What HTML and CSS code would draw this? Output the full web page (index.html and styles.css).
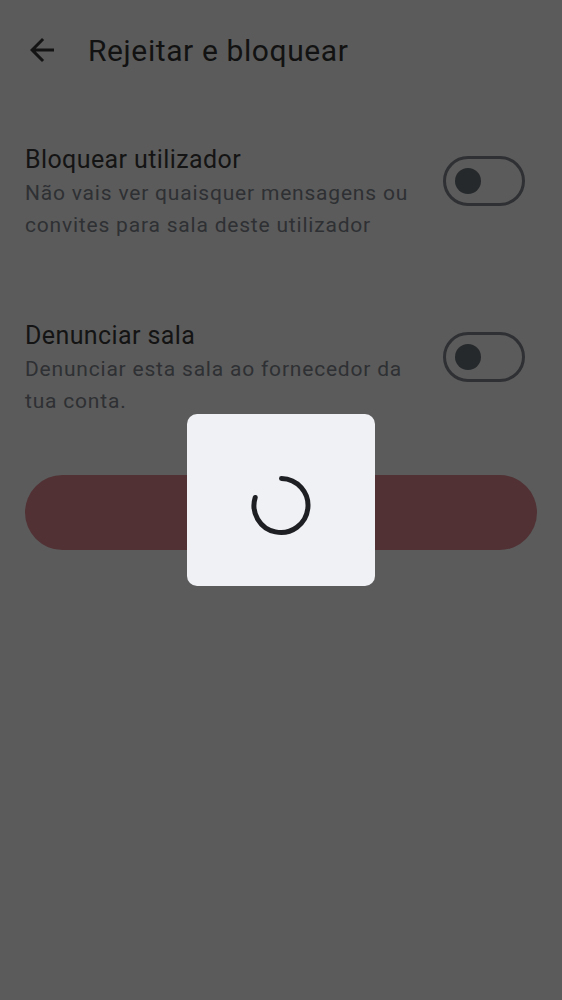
FILE: index.html
```html
<!DOCTYPE html>
<html lang="pt">
<head>
<meta charset="utf-8">
<link rel="stylesheet" href="styles.css">
</head>
<body>
<div class="screen">
  <header class="topbar">
    <svg class="back" viewBox="0 0 24 24" width="36" height="36"><path d="M20 11H7.83l5.59-5.59L12 4l-8 8 8 8 1.41-1.41L7.83 13H20v-2z" fill="#141414"/></svg>
    <h1 class="title">Rejeitar e bloquear</h1>
  </header>
  <section class="row row-first">
    <div class="texts">
      <div class="row-title">Bloquear utilizador</div>
      <div class="row-desc">Não vais ver quaisquer mensagens ou convites para sala deste utilizador</div>
    </div>
    <div class="toggle"><span class="knob"></span></div>
  </section>
  <section class="row row-second">
    <div class="texts">
      <div class="row-title">Denunciar sala</div>
      <div class="row-desc">Denunciar esta sala ao fornecedor da tua conta.</div>
    </div>
    <div class="toggle"><span class="knob"></span></div>
  </section>
  <div class="action"><div class="pill"></div></div>
  <div class="loading">
    <svg viewBox="0 0 64 64" width="64" height="64" class="spinner">
      <path d="M32.5 5.5 A 27 27 0 1 1 6.2 24.5" fill="none" stroke="#1d1f23" stroke-width="5" stroke-linecap="round"/>
    </svg>
  </div>
</div>
</body>
</html>
```
FILE: styles.css
```css
html, body {
  margin: 0;
  padding: 0;
  background: #5b5b5b;
}
body {
  font-family: Roboto, "Noto Sans", sans-serif;
}
.screen {
  position: relative;
  width: 562px;
  height: 1000px;
  background: #5b5b5b;
}
.topbar {
  display: flex;
  align-items: center;
  height: 100px;
  padding-left: 24px;
}
.back {
  display: block;
  margin-right: 28px;
}
.title {
  margin: 0;
  font-size: 30px;
  font-weight: 400;
  letter-spacing: 0.6px;
  color: #121212;
}
.row {
  display: flex;
  align-items: center;
  justify-content: space-between;
  padding: 0 37px 0 25px;
}
.row-first {
  margin-top: 43px;
}
.row-second {
  margin-top: 78px;
}
.texts {
  width: 400px;
}
.row-title {
  font-size: 25px;
  line-height: 34px;
  letter-spacing: 0.4px;
  color: #141414;
}
.row-desc {
  font-size: 21px;
  line-height: 32px;
  letter-spacing: 0.8px;
  color: #2e3033;
}
.toggle {
  box-sizing: border-box;
  width: 82px;
  height: 50px;
  border: 3px solid #2e3033;
  border-radius: 25px;
  display: flex;
  align-items: center;
  padding-left: 9px;
  margin-top: -23px;
}
.knob {
  width: 26px;
  height: 26px;
  border-radius: 50%;
  background: #26292c;
}
.action {
  padding: 0 25px;
  margin-top: 58px;
}
.pill {
  height: 75px;
  border-radius: 38px;
  background: #513134;
}
.loading {
  position: absolute;
  left: 187px;
  top: 414px;
  width: 188px;
  height: 172px;
  border-radius: 10px;
  background: #f0f1f5;
  display: flex;
  align-items: center;
  justify-content: center;
}
.spinner {
  display: block;
  margin-top: 10px;
}
```
